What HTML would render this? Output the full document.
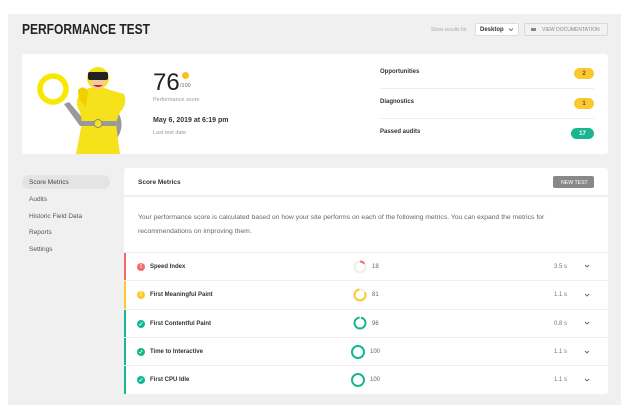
<!DOCTYPE html>
<html><head><meta charset="utf-8"><style>
*{margin:0;padding:0;box-sizing:border-box}
body{width:635px;height:420px;background:#fff;font-family:"Liberation Sans",sans-serif;color:#333;position:relative;overflow:hidden}
.abs{position:absolute}
.panel{left:8px;top:14px;width:613px;height:391px;background:#f0f0f0}
.card{background:#fff;border-radius:3px}
.t{position:absolute;white-space:nowrap}
.pill{position:absolute;height:11px;border-radius:6px;font-size:6px;font-weight:bold;display:flex;align-items:center;justify-content:center;color:#555}
.row{position:absolute;left:124px;width:484px;background:#fff}
.row .bar{position:absolute;left:0;top:0;bottom:0;width:2px}
.ic{position:absolute;left:13px;width:8px;height:8px;border-radius:50%;color:#fff;font-size:6px;font-weight:bold;display:flex;align-items:center;justify-content:center}
.nm{position:absolute;left:26px;font-size:6px;font-weight:bold;color:#333}
.sc{position:absolute;left:248px;font-size:6px;color:#666}
.tm{position:absolute;left:430px;font-size:6px;color:#777}
.chev{position:absolute;left:460px}
</style></head><body>
<div class="abs panel"></div>
<div class="t" style="left:22px;top:21px;font-size:15px;font-weight:bold;color:#222;transform:scaleX(0.8);transform-origin:left">PERFORMANCE TEST</div>
<div class="t" style="left:431px;top:27px;font-size:5px;color:#aaa">Show results for</div>
<div class="abs" style="left:475px;top:23px;width:44px;height:13px;background:#fff;border:1px solid #ddd;border-radius:2px"></div>
<div class="t" style="left:480px;top:27px;font-size:6px;font-weight:bold;color:#333">Desktop</div>
<svg class="abs" style="left:508px;top:27px" width="6" height="5"><path d="M1 1.5 L3 3.5 L5 1.5" fill="none" stroke="#555" stroke-width="0.8"/></svg>
<div class="abs" style="left:524px;top:23px;width:84px;height:13px;background:#f2f2f2;border:1px solid #d8d8d8;border-radius:2px"></div>
<div class="abs" style="left:531px;top:28px;width:5px;height:3px;background:#888"></div>
<div class="t" style="left:542px;top:27px;font-size:5px;color:#888">VIEW DOCUMENTATION</div>

<div class="abs card" style="left:22px;top:54px;width:586px;height:100px"></div>
<svg class="abs" style="left:22px;top:54px" width="110" height="100" viewBox="0 0 110 100">
<circle cx="31" cy="35" r="13" fill="none" stroke="#f8e800" stroke-width="5.5"/>
<path d="M42 50 L58 72 L64 68 L47 48 Z" fill="#999"/>
<path d="M96 58 Q104 72 94 86 L89 82 Q96 70 90 60Z" fill="#999"/>
<path d="M62 36 Q75 30 88 36 L102 40 Q106 50 98 58 L94 68 Q95 80 98 100 L54 100 Q58 80 60 68 L58 58 Q50 46 62 36Z" fill="#f5e21a"/>
<path d="M56 36 Q62 30 66 38 L64 52 Q56 48 56 36Z" fill="#f0d000"/>
<rect x="58" y="67" width="36" height="5" fill="#999"/>
<circle cx="76" cy="69.5" r="4" fill="#f5e21a" stroke="#888" stroke-width="1"/>
<circle cx="76" cy="24" r="11" fill="#f5e21a"/>
<ellipse cx="76" cy="28" rx="7" ry="7" fill="#f3c9a0"/>
<rect x="66" y="18" width="20" height="8" rx="2" fill="#222"/>
<path d="M71 31 Q76 35 81 31Z" fill="#c22"/>
</svg>
<div class="t" style="left:153px;top:69px;font-size:24px;color:#222">76</div>
<div class="abs" style="left:182px;top:72px;width:7px;height:7px;border-radius:50%;background:#f8c21a"></div>
<div class="t" style="left:180px;top:83px;font-size:5.5px;color:#666">/100</div>
<div class="t" style="left:153px;top:97px;font-size:5.5px;color:#999">Performance score</div>
<div class="t" style="left:153px;top:117px;font-size:7px;font-weight:bold;color:#333">May 6, 2019 at 6:19 pm</div>
<div class="t" style="left:153px;top:130px;font-size:5.5px;color:#999">Last test date</div>

<div class="t" style="left:380px;top:69px;font-size:6px;font-weight:bold">Opportunities</div>
<div class="pill" style="left:574px;top:68px;width:20px;background:#fcc82d">2</div>
<div class="abs" style="left:380px;top:88px;width:214px;height:1px;background:#eee"></div>
<div class="t" style="left:380px;top:99px;font-size:6px;font-weight:bold">Diagnostics</div>
<div class="pill" style="left:574px;top:98px;width:20px;background:#fcc82d">1</div>
<div class="abs" style="left:380px;top:118px;width:214px;height:1px;background:#eee"></div>
<div class="t" style="left:380px;top:129px;font-size:6px;font-weight:bold">Passed audits</div>
<div class="pill" style="left:571px;top:128px;width:23px;background:#19b58f;color:#fff">17</div>

<div class="abs" style="left:22px;top:175px;width:88px;height:14px;background:#e4e4e4;border-radius:7px"></div>
<div class="t" style="left:29px;top:179px;font-size:6.5px;color:#444">Score Metrics</div>
<div class="t" style="left:29px;top:196px;font-size:6.5px;color:#555">Audits</div>
<div class="t" style="left:29px;top:213px;font-size:6.5px;color:#555">Historic Field Data</div>
<div class="t" style="left:29px;top:229px;font-size:6.5px;color:#555">Reports</div>
<div class="t" style="left:29px;top:246px;font-size:6.5px;color:#555">Settings</div>

<div class="abs card" style="left:124px;top:168px;width:484px;height:27px;border-radius:3px 3px 0 0"></div>
<div class="t" style="left:138px;top:179px;font-size:6.5px;font-weight:bold;color:#333">Score Metrics</div>
<div class="abs" style="left:553px;top:176px;width:41px;height:12px;background:#888;border-radius:2px"></div>
<div class="t" style="left:561px;top:180px;font-size:5.2px;color:#fff">NEW TEST</div>
<div class="abs" style="left:124px;top:197px;width:484px;height:55px;background:#fff"></div>
<div class="t" style="left:138px;top:214px;font-size:6.8px;color:#666">Your performance score is calculated based on how your site performs on each of the following metrics. You can expand the metrics for</div>
<div class="t" style="left:138px;top:228px;font-size:6.8px;color:#666">recommendations on improving them.</div>

<div class="row" style="top:253px;height:27px"><div class="bar" style="background:#f26b6b"></div><div class="ic" style="top:10px;background:#f26b6b">!</div><div class="nm" style="top:11px">Speed Index</div>
<svg class="abs" style="left:229px;top:7px" width="14" height="14"><circle cx="7" cy="7" r="5.5" fill="none" stroke="#eee" stroke-width="2"/><path d="M7 1.5 A5.5 5.5 0 0 1 11.3 3.6" fill="none" stroke="#f26b6b" stroke-width="2"/></svg>
<div class="sc" style="top:11px">18</div><div class="tm" style="top:11px">3.5 s</div><svg class="chev" style="top:11px" width="6" height="5"><path d="M1 1 L3 3 L5 1" fill="none" stroke="#666" stroke-width="0.9"/></svg></div>

<div class="row" style="top:281px;height:28px"><div class="bar" style="background:#fcc82d"></div><div class="ic" style="top:10px;background:#fcc82d">!</div><div class="nm" style="top:11px">First Meaningful Paint</div>
<svg class="abs" style="left:229px;top:7px" width="14" height="14"><circle cx="7" cy="7" r="5.5" fill="none" stroke="#eee" stroke-width="2"/><circle cx="7" cy="7" r="5.5" fill="none" stroke="#fcc82d" stroke-width="2" stroke-dasharray="28 35" transform="rotate(-30 7 7)"/></svg>
<div class="sc" style="top:11px">81</div><div class="tm" style="top:11px">1.1 s</div><svg class="chev" style="top:12px" width="6" height="5"><path d="M1 1 L3 3 L5 1" fill="none" stroke="#666" stroke-width="0.9"/></svg></div>

<div class="row" style="top:310px;height:27px"><div class="bar" style="background:#19b58f"></div><div class="ic" style="top:10px;background:#19b58f">✓</div><div class="nm" style="top:11px">First Contentful Paint</div>
<svg class="abs" style="left:229px;top:6px" width="14" height="14"><circle cx="7" cy="7" r="5.5" fill="none" stroke="#19b58f" stroke-width="2" stroke-dasharray="33 35" transform="rotate(-80 7 7)"/></svg>
<div class="sc" style="top:11px">96</div><div class="tm" style="top:11px">0.8 s</div><svg class="chev" style="top:11px" width="6" height="5"><path d="M1 1 L3 3 L5 1" fill="none" stroke="#666" stroke-width="0.9"/></svg></div>

<div class="row" style="top:338px;height:27px"><div class="bar" style="background:#19b58f"></div><div class="ic" style="top:10px;background:#19b58f">✓</div><div class="nm" style="top:11px">Time to Interactive</div>
<svg class="abs" style="left:226px;top:6px" width="16" height="16"><circle cx="8" cy="8" r="6" fill="none" stroke="#19b58f" stroke-width="2"/></svg>
<div class="sc" style="left:246px;top:11px">100</div><div class="tm" style="top:11px">1.1 s</div><svg class="chev" style="top:12px" width="6" height="5"><path d="M1 1 L3 3 L5 1" fill="none" stroke="#666" stroke-width="0.9"/></svg></div>

<div class="row" style="top:366px;height:28px;border-radius:0 0 3px 3px"><div class="bar" style="background:#19b58f"></div><div class="ic" style="top:10px;background:#19b58f">✓</div><div class="nm" style="top:11px">First CPU Idle</div>
<svg class="abs" style="left:226px;top:6px" width="16" height="16"><circle cx="8" cy="8" r="6" fill="none" stroke="#19b58f" stroke-width="2"/></svg>
<div class="sc" style="left:246px;top:11px">100</div><div class="tm" style="top:11px">1.1 s</div><svg class="chev" style="top:12px" width="6" height="5"><path d="M1 1 L3 3 L5 1" fill="none" stroke="#666" stroke-width="0.9"/></svg></div>
</body></html>
